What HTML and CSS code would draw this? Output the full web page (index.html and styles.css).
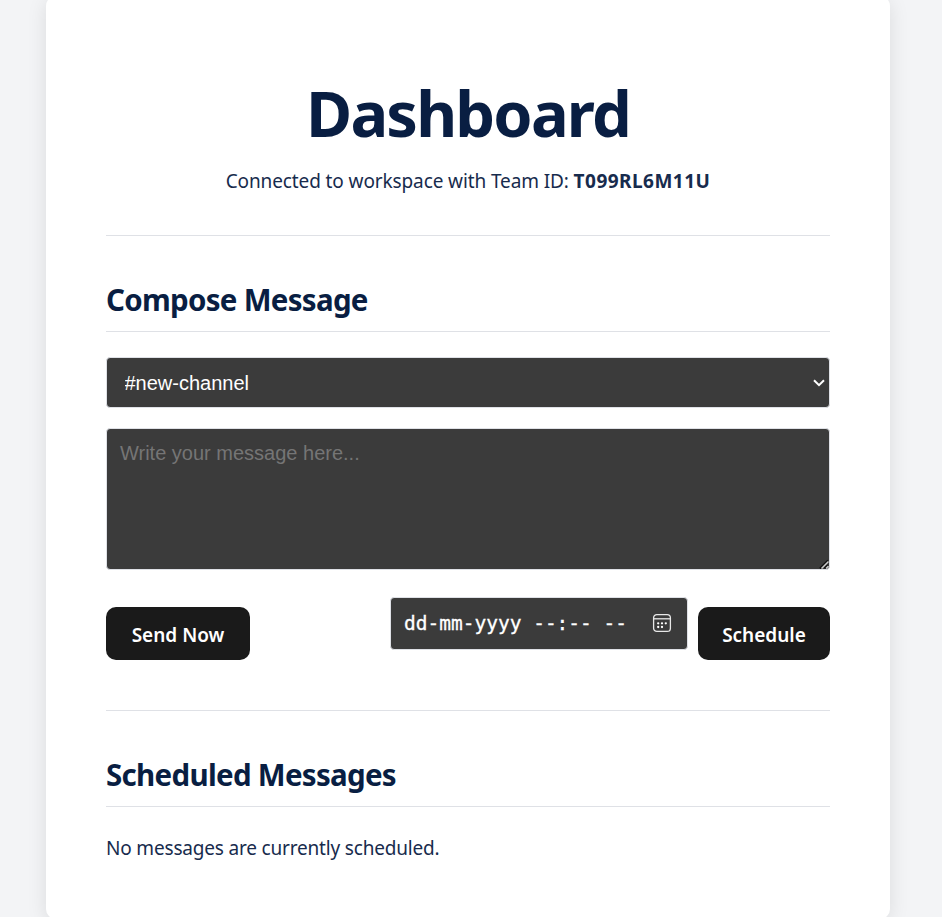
FILE: index.html
```html
<!DOCTYPE html>
<html lang="en">
<head>
<meta charset="utf-8">
<title>Dashboard</title>
<link rel="stylesheet" href="styles.css">
</head>
<body>
<main class="card">
  <header class="header">
    <h1>Dashboard</h1>
    <p><span class="status">Connected to workspace with Team ID: </span><strong>T099RL6M11U</strong></p>
  </header>
  <section class="compose">
    <h2>Compose Message</h2>
    <div class="select-wrap">
      <select class="field channel"><option>#new-channel</option></select>
      <svg class="chevron" width="12" height="8" viewBox="0 0 12 8"><path d="M1 1.3 6 6.2 11 1.3" fill="none" stroke="#fff" stroke-width="2"/></svg>
    </div>
    <div class="message-wrap">
      <textarea class="field message" placeholder="Write your message here..."></textarea>
      <svg class="grip" width="10" height="10" viewBox="0 0 10 10" fill="none"><path d="M1 9.5 9 1.5M5.5 9.5 9 6" stroke="#111" stroke-width="2"/><path d="M2.5 9.5 9.5 2.5M7 9.5 9.5 7" stroke="#ccc" stroke-width="1.5"/></svg>
    </div>
    <div class="actions">
      <button class="send">Send Now</button>
      <div class="schedule-group">
        <div class="field datetime">
          <span>dd-mm-yyyy --:-- --</span>
          <svg class="calendar" width="20" height="20" viewBox="0 0 20 20" fill="none" stroke="#e8e8e8" stroke-width="1.3"><rect x="1.6" y="1.6" width="16.8" height="16.8" rx="3.2"/><path d="M1.6 5.8h16.8"/><g fill="#fff" stroke="none"><circle cx="6.2" cy="10.3" r="1.15"/><circle cx="10" cy="10.3" r="1.15"/><circle cx="13.8" cy="10.3" r="1.15"/><circle cx="6.2" cy="14" r="1.15"/><circle cx="10" cy="14" r="1.15"/></g></svg>
        </div>
        <button class="schedule">Schedule</button>
      </div>
    </div>
  </section>
  <section class="scheduled">
    <h2>Scheduled Messages</h2>
    <p class="empty">No messages are currently scheduled.</p>
  </section>
</main>
</body>
</html>
```
FILE: styles.css
```css
* { box-sizing: border-box; }
html { background: #f3f4f6; overflow: hidden; }
body {
  margin: 0;
  height: 917px;
  overflow: hidden;
  background: #f3f4f6;
  color: #172b4d;
  font-family: "Noto Sans", sans-serif;
  font-size: 19px;
}
.card {
  width: 844px;
  height: 923px;
  margin: -4px 0 0 46px;
  padding: 81px 60px 0;
  background: #fff;
  border-radius: 10px;
  box-shadow: 0 4px 20px rgba(0, 0, 0, 0.1);
}
h1, h2, p { margin: 0; }
h1, h2 { color: #091e42; font-weight: 700; }
.header {
  height: 159px;
  border-bottom: 1px solid #dfe1e6;
  text-align: center;
}
h1 { font-size: 63px; line-height: 71px; letter-spacing: -1.8px; white-space: nowrap; }
.header p { margin-top: 18px; line-height: 30px; white-space: nowrap; }
.status { letter-spacing: -0.11px; }
.header strong { letter-spacing: 0.47px; }
h2 {
  height: 96px;
  padding-top: 49px;
  border-bottom: 1px solid #dfe1e6;
  font-size: 29.5px;
  line-height: 30px;
  letter-spacing: -0.7px;
}
.field {
  border: 1px solid #dfe1e6;
  border-radius: 4px;
  background: #3b3b3b;
  color: #fff;
}
.select-wrap { position: relative; margin-top: 25px; }
.channel {
  display: block;
  width: 724px;
  height: 51px;
  padding: 0 17.5px;
  appearance: none;
  font: 20px "Liberation Sans", sans-serif;
}
.chevron { position: absolute; right: 5px; top: 22px; }
.message-wrap { position: relative; margin-top: 20px; }
.message {
  display: block;
  width: 724px;
  height: 142px;
  padding: 13px 13px 12px;
  resize: none;
  font: 20px "Liberation Sans", sans-serif;
}
.message::placeholder { color: #757575; }
.grip { position: absolute; right: 1px; bottom: 1px; pointer-events: none; }
.actions { display: flex; justify-content: space-between; margin-top: 27px; height: 113px; }
button {
  height: 53px;
  margin-top: 10px;
  padding: 2px 0 0;
  border: 0;
  border-radius: 10px;
  background: #1a1a1a;
  color: #fff;
  font: 600 19px "Noto Sans", sans-serif;
}
.send { width: 144px; }
.schedule { width: 132px; }
.schedule-group { display: flex; gap: 10px; }
.datetime {
  display: flex;
  align-items: center;
  justify-content: space-between;
  width: 298px;
  height: 53px;
  padding: 0 15px 0 13px;
  font: 19.5px "DejaVu Sans Mono", monospace;
  -webkit-text-stroke: 0.3px #fff;
  white-space: pre;
}
.calendar { margin-bottom: 2px; }
.scheduled { border-top: 1px solid #dfe1e6; }
.empty { margin-top: 26px; line-height: 30px; letter-spacing: -0.18px; }
```
